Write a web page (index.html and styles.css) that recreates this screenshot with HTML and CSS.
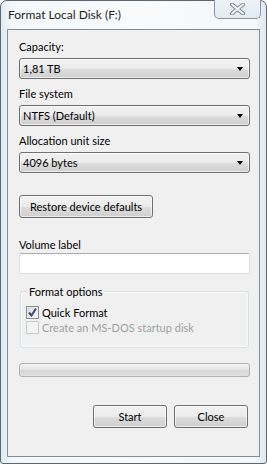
FILE: index.html
```html
<!DOCTYPE html>
<html lang="en">

<head>
    <meta charset="UTF-8">
    <meta name="viewport" content="width=device-width, initial-scale=1.0">
    <title>Format Local Disk (F:)</title>
    <link rel="stylesheet" href="styles.css">
</head>

<body>
    <div class="window">
        <div class="titlebar">
            <span class="title">Format Local Disk (F:)</span>
            <div class="close-btn">
                <svg width="17" height="12" viewBox="0 0 17 12">
                    <path d="M3 1.5 L14 10.5 M14 1.5 L3 10.5" stroke="#7b8a9a" stroke-width="4" stroke-linecap="round" fill="none" />
                    <path d="M3 1.5 L14 10.5 M14 1.5 L3 10.5" stroke="#f4f6f9" stroke-width="2" stroke-linecap="round" fill="none" />
                </svg>
            </div>
        </div>

        <div class="client">
            <div class="label">Capacity:</div>
            <div class="combo">
                <span>1,81 TB</span>
                <span class="arrow"></span>
            </div>

            <div class="label">File system</div>
            <div class="combo">
                <span>NTFS (Default)</span>
                <span class="arrow"></span>
            </div>

            <div class="label">Allocation unit size</div>
            <div class="combo">
                <span>4096 bytes</span>
                <span class="arrow"></span>
            </div>

            <div class="button restore">Restore device defaults</div>

            <div class="label volume">Volume label</div>
            <div class="textbox"></div>

            <div class="groupbox">
                <div class="legend">Format options</div>
                <div class="check-row">
                    <span class="checkbox checked">
                        <svg width="11" height="11" viewBox="0 0 11 11">
                            <path d="M2 5.5 L4.5 8.5 L9 1.5" stroke="#3c4f7c" stroke-width="2" fill="none" />
                        </svg>
                    </span>
                    <span>Quick Format</span>
                </div>
                <div class="check-row disabled">
                    <span class="checkbox"></span>
                    <span>Create an MS-DOS startup disk</span>
                </div>
            </div>

            <div class="progress"></div>

            <div class="actions">
                <div class="button">Start</div>
                <div class="button">Close</div>
            </div>
        </div>
    </div>
</body>

</html>
```

FILE: styles.css
```css
body {
    margin: 0;
    padding: 0;
    font-family: Lato, "Noto Sans", Arial, sans-serif;
    font-size: 11px;
    color: #000;
    background-color: #fff;
}

.window {
    width: 267px;
    height: 464px;
    box-sizing: border-box;
    border: 1px solid #5d6770;
    border-radius: 7px 7px 3px 3px;
    background: linear-gradient(90deg, #dfeaf4 0%, #f4f8fb 4%, #f8fafc 50%, #f4f8fb 96%, #dde8f2 100%);
    display: flex;
    flex-direction: column;
}

.titlebar {
    height: 28px;
    display: flex;
    align-items: flex-start;
}

.title {
    margin-left: 7px;
    margin-top: 6px;
    font-size: 12px;
    line-height: 16px;
    color: #1e1e1e;
}

.close-btn {
    margin-left: auto;
    margin-right: 5px;
    width: 45px;
    height: 18px;
    margin-top: -1px;
    border: 1px solid #8a96a3;
    border-top: none;
    border-radius: 0 0 5px 5px;
    background: linear-gradient(#eef3f8, #e2eaf2);
    display: flex;
    align-items: center;
    justify-content: center;
}

.client {
    margin: 0 6px 6px 6px;
    height: 428px;
    box-sizing: border-box;
    border: 1px solid #838b93;
    background-color: #f0f0f0;
    padding: 9px 9px 0 11px;
    display: flex;
    flex-direction: column;
}

.label {
    line-height: 15px;
    height: 15px;
    margin-bottom: 4px;
}

.combo {
    height: 21px;
    box-sizing: border-box;
    border: 1px solid #707070;
    border-radius: 3px;
    background: linear-gradient(#f2f2f2 0%, #ebebeb 50%, #dddddd 51%, #cfcfcf 100%);
    box-shadow: inset 0 0 0 1px rgba(255, 255, 255, 0.6);
    display: flex;
    align-items: center;
    padding: 0 5px 0 3px;
    margin-bottom: 7px;
    line-height: 15px;
}

.arrow {
    margin-left: auto;
    width: 0;
    height: 0;
    border-left: 3.5px solid transparent;
    border-right: 3.5px solid transparent;
    border-top: 4px solid #000;
    margin-right: 1px;
}

.button {
    height: 23px;
    box-sizing: border-box;
    border: 1px solid #707070;
    border-radius: 3px;
    background: linear-gradient(#f2f2f2 0%, #ebebeb 50%, #dddddd 51%, #cfcfcf 100%);
    box-shadow: inset 0 0 0 1px rgba(255, 255, 255, 0.6);
    display: flex;
    align-items: center;
    justify-content: center;
    line-height: 15px;
}

.restore {
    width: 134px;
    margin-top: 15px;
}

.volume {
    margin-top: 19px;
    margin-bottom: 1px;
}

.textbox {
    height: 21px;
    box-sizing: border-box;
    border: 1px solid #dbdfe6;
    border-top-color: #abadb3;
    border-radius: 2px;
    background-color: #fff;
}

.groupbox {
    margin-top: 17px;
    margin-left: 1px;
    margin-right: 1px;
    height: 57px;
    box-sizing: border-box;
    border: 1px solid #d5dfe5;
    border-radius: 3px;
    box-shadow: inset 0 0 0 1px #fbfbfb;
    position: relative;
    padding: 13px 0 0 5px;
}

.legend {
    position: absolute;
    top: -8px;
    left: 6px;
    padding: 0 2px;
    background-color: #f0f0f0;
    line-height: 15px;
}

.check-row {
    display: flex;
    align-items: center;
    height: 15px;
    line-height: 15px;
    gap: 3px;
}

.checkbox {
    width: 13px;
    height: 13px;
    box-sizing: border-box;
    border: 1px solid #8e8f8f;
    background: linear-gradient(135deg, #dcdcdc, #fbfbfb);
    display: flex;
    align-items: center;
    justify-content: center;
}

.check-row.disabled {
    color: #a0a0a0;
}

.check-row.disabled .checkbox {
    border-color: #c9c9c9;
    background: #f4f4f4;
}

.progress {
    margin-top: 15px;
    height: 14px;
    box-sizing: border-box;
    border: 1px solid #b2b2b2;
    border-radius: 3px;
    background: linear-gradient(#f3f3f3 0%, #e6e6e6 45%, #d6d6d6 55%, #e2e2e2 100%);
}

.actions {
    margin-top: 28px;
    display: flex;
    justify-content: flex-end;
    gap: 7px;
    padding-right: 2px;
}

.actions .button {
    width: 74px;
}
```
